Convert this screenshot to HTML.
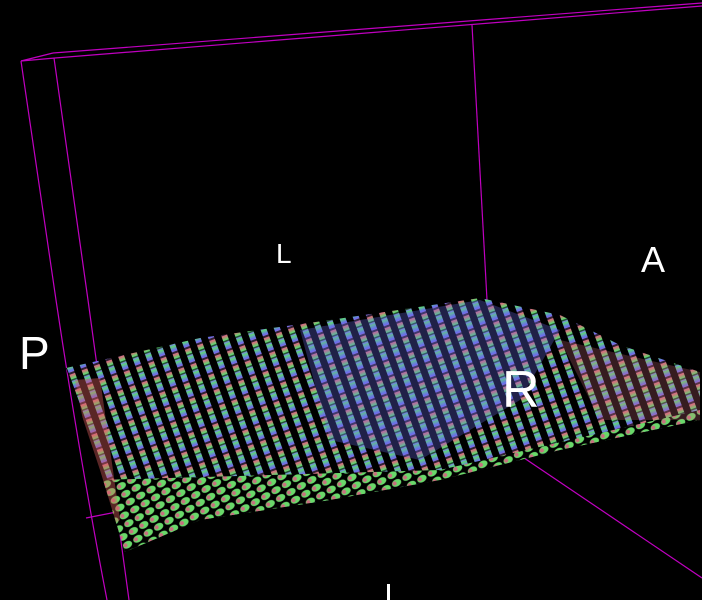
<!DOCTYPE html>
<html><head><style>
html,body{margin:0;padding:0;background:#000;width:702px;height:600px;overflow:hidden}
svg{display:block}
text{font-family:"Liberation Sans",sans-serif;fill:#fff}
</style></head><body>
<svg width="702" height="600" viewBox="0 0 702 600">
<defs>
<linearGradient id="g1" x1="0" y1="0" x2="0" y2="1">
<stop offset="0" stop-color="#5be36a"/><stop offset="0.3" stop-color="#6a6cf0"/>
<stop offset="0.55" stop-color="#d8707a"/><stop offset="0.8" stop-color="#58e070"/><stop offset="1" stop-color="#7a80e8"/>
</linearGradient>
<pattern id="st" width="13" height="16" patternUnits="userSpaceOnUse" patternTransform="rotate(-20)">
<rect width="13" height="16" fill="#000"/>
<rect x="2" width="6" height="16" fill="url(#g1)"/>
<rect x="2" y="6" width="6" height="2" fill="#000" opacity=".7"/>
<rect x="2" y="13" width="6" height="1.5" fill="#000" opacity=".6"/>
</pattern>
<pattern id="st2" width="12" height="9" patternUnits="userSpaceOnUse" patternTransform="rotate(-30)">
<rect width="12" height="9" fill="#000"/>
<ellipse cx="6" cy="4.5" rx="5" ry="3.5" fill="#6ad86a"/>
<ellipse cx="4" cy="4" rx="2" ry="2" fill="#c87080"/>
</pattern>
<clipPath id="slab"><polygon points="66,368 200,338 330,320 480,298 560,315 620,345 700,372 700,420 560,450 440,480 330,500 200,520 125,552 100,470"/></clipPath>
</defs>
<g fill="none" stroke="#c000c0" stroke-width="1.2">
<line x1="53" y1="53" x2="702" y2="3"/>
<line x1="55" y1="58" x2="702" y2="6"/>
<line x1="21" y1="61" x2="53" y2="53"/>
<line x1="21" y1="61" x2="55" y2="58"/>
<path d="M21 61 L56 300 Q80 460 107 600"/>
<path d="M54 58 L88 300 L129 600"/>
<line x1="472" y1="25" x2="487" y2="300"/>
<line x1="86" y1="518" x2="493" y2="438"/>
<line x1="493" y1="437" x2="702" y2="578"/>
</g>
<g clip-path="url(#slab)">
<rect x="60" y="290" width="650" height="270" fill="url(#st)"/>
<polygon points="100,480 440,470 700,410 700,440 440,485 125,555" fill="url(#st2)"/>
<polygon points="300,330 480,300 560,330 520,400 420,460 330,440" fill="#6a6cf0" opacity=".3"/>
<polygon points="560,340 700,372 700,420 600,420" fill="#d87080" opacity=".25"/>
<polygon points="75,380 100,378 120,520 105,530" fill="#e06060" opacity=".4"/>
</g>
<text x="276" y="263" font-size="28">L</text>
<text x="641" y="272" font-size="36">A</text>
<text x="19" y="369" font-size="46">P</text>
<text x="502" y="407" font-size="52">R</text>
<rect x="387" y="584" width="3" height="16" fill="#fff"/>
</svg>
</body></html>
